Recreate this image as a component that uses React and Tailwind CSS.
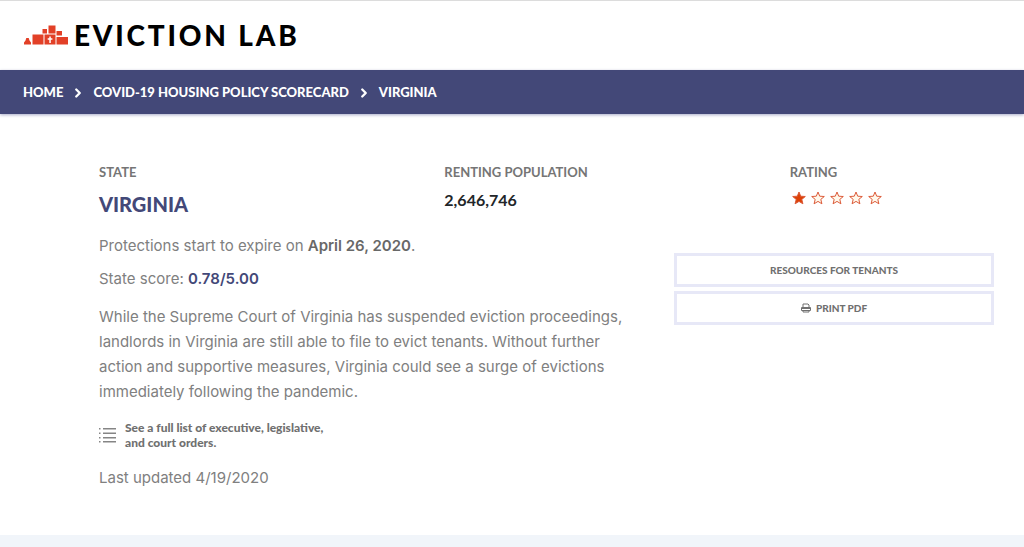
import { FiChevronRight } from 'react-icons/fi';

const CRUMBS = [
  { label: 'Home', href: '#home' },
  { label: 'COVID-19 Housing Policy Scorecard', href: '#scorecard' },
  { label: 'Virginia', href: '#virginia' }
];

const TOTAL_STARS = 5;

const LogoMark = () => (
  <svg viewBox="0 0 44 20" className="w-11 h-5" fill="#e24027" aria-hidden="true">
    <path d="M0 19.5v-2l1.500-2 .8-2.500h2.400l.8 2.500 1.500 2v2z" />
    <path d="M8.500 9.500h11v10h-11zM18.500 4h4.500v4.500h-4.500zM24.500 0.500h7v8h-7zM32.500 6h5.500v4.500h-5.500zM32.500 12H44v7.500H32.500z" />
    <path
      fillRule="evenodd"
      d="M20.500 9.500h11v10h-11zM25.300 11.500v1.800h-1.600v1.400h1.600v3.300h1.500v-3.300h1.600v-1.400h-1.600v-1.800z"
    />
  </svg>
);

const ListIcon = () => (
  <svg viewBox="0 0 18 16" className="w-[18px] h-4 shrink-0" fill="#858585" aria-hidden="true">
    <path d="M4 1h13v1.500H4zM4 5.500h13V7H4zM4 10h13v1.500H4zM4 14h13v1.500H4z" />
    <path d="M0 1h1.500v1.500H0zM0 5.500h1.500V7H0zM0 10h1.500v1.500H0zM0 14h1.500v1.500H0z" />
  </svg>
);

const PrinterIcon = () => (
  <svg viewBox="0 0 10 10" className="size-[10px]" fill="none" stroke="currentColor" aria-hidden="true">
    <path d="M2 4.500V1h5l1 1v2.500M2 7.500v1.500h6V7.500" />
    <path d="M.5 4.500h9v3h-9z" />
    <path d="M1 5.500h8" />
  </svg>
);

const Star = ({ filled }) => (
  <svg viewBox="0 0 14 14" className="size-[14px]" fill={filled ? '#dc4106' : '#fff9ec'} stroke="#dc5a38" aria-hidden="true">
    <path d="M7 1l1.700 4.200 4.600.3-3.500 2.900 1.100 4.400L7 10.400l-3.900 2.400 1.100-4.400L.7 5.500l4.600-.3z" />
  </svg>
);

const Rating = ({ value }) => (
  <div role="img" aria-label={`${value} of ${TOTAL_STARS} stars`} className="flex gap-[5px] pl-[2px] mt-[9px]">
    {Array.from({ length: TOTAL_STARS }, (_, i) => (
      <Star key={i} filled={i < value} />
    ))}
  </div>
);

const Label = ({ children }) => (
  <h2 className="text-[13px] leading-5 font-bold uppercase text-[#757575]">{children}</h2>
);

const buttonClass =
  'flex h-[34px] w-full items-center justify-center gap-[5px] border-[3px] border-[#e7e8f7] bg-white text-[10px] font-black uppercase text-[#707070] cursor-pointer';

const App = () => {
  return (
    <div className="flex min-h-screen flex-col bg-white font-['Lato',sans-serif]">
      <header className="border-t border-[#dcdcdc] px-6 pt-[14px] pb-[15px]">
        <a href="#home" className="flex h-10 items-center gap-[6px]">
          <LogoMark />
          <span className="text-[28px] leading-10 font-black tracking-widest text-black">EVICTION LAB</span>
        </a>
      </header>

      <nav aria-label="Breadcrumb" className="bg-[#434878] px-[23px] pt-px shadow-[0_1px_3px_#a9acc8]">
        <ol className="flex h-[43px] items-center gap-2 text-[13px] font-black uppercase text-white">
          {CRUMBS.map((crumb, i) => (
            <li key={crumb.label} className="flex items-center gap-2">
              {i > 0 && <FiChevronRight size={14} strokeWidth={4} aria-hidden="true" />}
              <a href={crumb.href}>{crumb.label}</a>
            </li>
          ))}
        </ol>
      </nav>

      <main className="flex-1 pt-12 pr-[30px] pb-10 pl-[99px]">
        <section className="grid grid-cols-3 gap-x-[141px]">
          <div>
            <Label>State</Label>
            <h1 className="mt-2 text-[20px] leading-7 font-black uppercase text-[#434878]">Virginia</h1>
          </div>
          <div className="whitespace-nowrap">
            <Label>Renting Population</Label>
            <p className="mt-2 text-base leading-5 font-bold text-[#222629]">2,646,746</p>
          </div>
          <div>
            <Label>Rating</Label>
            <Rating value={1} />
          </div>
        </section>

        <section className="mt-[15px] flex gap-[30px]">
          <div className="flex-1 font-['Inter',sans-serif] text-[15px] leading-[25px] text-[#808080]">
            <p>
              Protections start to expire on <strong className="font-semibold text-[#686868]">April 26, 2020</strong>.
            </p>
            <p className="mt-2">
              State score: <strong className="font-semibold text-[#434878]">0.78/5.00</strong>
            </p>
            <p className="mt-[13px]">
              While the Supreme Court of Virginia has suspended eviction proceedings, landlords in Virginia are
              still able to file to evict tenants. Without further action and supportive measures, Virginia could
              see a surge of evictions immediately following the pandemic.
            </p>
            <a href="#orders" className="mt-4 flex w-64 items-center gap-2 font-['Lato',sans-serif] text-xs leading-[15px] font-black text-[#707070]">
              <ListIcon />
              <span>
                See a full list of executive, legislative,
                <br />
                and court orders.
              </span>
            </a>
            <p className="mt-[15px]">Last updated 4/19/2020</p>
          </div>

          <div className="flex w-80 flex-col gap-1 pt-5">
            <button type="button" className={buttonClass}>
              Resources for Tenants
            </button>
            <button type="button" className={buttonClass}>
              <PrinterIcon />
              Print PDF
            </button>
          </div>
        </section>
      </main>

      <div className="h-3 bg-[#f1f5fa]" />
    </div>
  );
};

export default App;
